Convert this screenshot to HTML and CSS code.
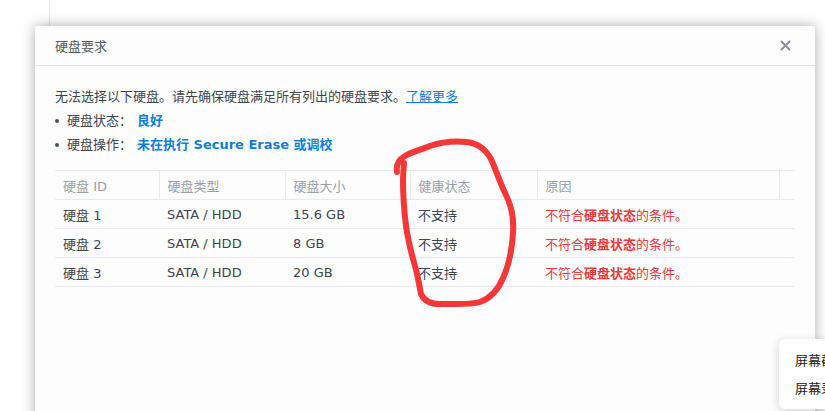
FILE: index.html
```html
<!DOCTYPE html>
<html lang="zh-CN">
<head>
<meta charset="utf-8">
<title>硬盘要求</title>
<link rel="stylesheet" href="styles.css">
</head>
<body>
<div class="backdrop"></div>

<div class="dialog">
  <div class="dlg-header">
    <span class="dlg-title">硬盘要求</span>
    <svg class="close" width="11" height="11" viewBox="0 0 11 11"><path d="M1 1L10 10M10 1L1 10" stroke="#8b9099" stroke-width="2" fill="none"/></svg>
  </div>
  <div class="dlg-body">
    <p class="intro">无法选择以下硬盘。请先确保硬盘满足所有列出的硬盘要求。<a class="link" href="#">了解更多</a></p>
    <ul class="reqs">
      <li><span class="label">硬盘状态：</span><span class="value">良好</span></li>
      <li><span class="label">硬盘操作：</span><span class="value">未在执行 Secure Erase 或调校</span></li>
    </ul>
    <table class="grid">
      <colgroup>
        <col style="width:104px"><col style="width:126px"><col style="width:125px"><col style="width:127px"><col style="width:242px"><col>
      </colgroup>
      <thead>
        <tr><th>硬盘 ID</th><th>硬盘类型</th><th>硬盘大小</th><th>健康状态</th><th>原因</th><th class="last"></th></tr>
      </thead>
      <tbody>
        <tr><td>硬盘 1</td><td>SATA / HDD</td><td>15.6 GB</td><td>不支持</td><td class="reason">不符合<b>硬盘状态</b>的条件。</td><td></td></tr>
        <tr><td>硬盘 2</td><td>SATA / HDD</td><td>8 GB</td><td>不支持</td><td class="reason">不符合<b>硬盘状态</b>的条件。</td><td></td></tr>
        <tr><td>硬盘 3</td><td>SATA / HDD</td><td>20 GB</td><td>不支持</td><td class="reason">不符合<b>硬盘状态</b>的条件。</td><td></td></tr>
      </tbody>
    </table>
  </div>
</div>

<svg class="scribble" width="825" height="411" viewBox="0 0 825 411">
  <path d="M397 172 C396 166 398 160 405 156 C412 152 420 150 430 146 C442 142 455 141 466 142 C478 143 486 150 491 159 C496 170 500 183 506 195 C512 207 514 220 513 233 C512 250 509 265 503 278 C498 290 491 298 480 302 C470 305 455 304 440 304 C430 304 424 301 421 294 C419 285 418 276 415 266 C411 252 408 240 406 226 C404 210 403 195 403 180 C403 172 404 166 404 163" fill="none" stroke="#f73737" stroke-width="6" stroke-linecap="round" stroke-linejoin="round"/>
</svg>

<div class="ctx-menu">
  <div class="ctx-item">屏幕截图</div>
  <div class="ctx-item">屏幕录制</div>
</div>
</body>
</html>
```

FILE: styles.css
```css
html, body {
  margin: 0;
  padding: 0;
  width: 825px;
  height: 411px;
  overflow: hidden;
  background: #ffffff;
  font-family: "DejaVu Sans", "Noto Sans CJK SC", sans-serif;
  font-size: 13px;
  color: #3c4650;
}

.backdrop {
  margin-left: 49px;
  height: 411px;
  border-left: 1px solid #e4e4e4;
}

.dialog {
  position: absolute;
  left: 35px;
  top: 26px;
  width: 780px;
  height: 420px;
  background: #fdfdfd;
  border-radius: 3px;
  box-shadow: 0 0 14px rgba(0, 0, 0, 0.33);
}

.dlg-header {
  height: 39px;
  padding: 0 24px 0 20px;
  border-bottom: 1px solid #e3e3e3;
  display: flex;
  align-items: center;
  justify-content: space-between;
}

.dlg-title {
  font-family: "Noto Sans CJK SC", sans-serif;
  font-size: 13px;
  color: #525a63;
}

.close {
  display: block;
}

.dlg-body {
  padding: 19px 20px 0 20px;
}

.intro {
  margin: 0;
  line-height: 24px;
  color: #3c4650;
}

.link {
  color: #0a7fe0;
  text-decoration: underline;
}

.reqs {
  list-style: none;
  margin: 0;
  padding: 0;
}

.reqs li {
  display: flex;
  align-items: center;
  line-height: 24px;
}

.reqs li::before {
  content: "";
  width: 4px;
  height: 4px;
  border-radius: 50%;
  background: #4a525c;
  margin: 0 8px 0 0;
}

.label {
  color: #3c4650;
}

.value {
  margin-left: 5px;
  color: #0a7fe0;
  font-weight: bold;
}

.grid {
  margin-top: 13px;
  width: 740px;
  border-collapse: collapse;
  table-layout: fixed;
}

.grid th,
.grid td {
  height: 28px;
  padding: 0 0 0 8px;
  text-align: left;
  white-space: nowrap;
  border-bottom: 1px solid #e6ebf1;
}

.grid th {
  font-weight: normal;
  color: #9aa0a7;
  border-top: 1px solid #e6ebf1;
  border-right: 1px solid #e6ebf1;
}

.grid th.last {
  border-right: none;
}

.grid td {
  color: #3c4650;
}

.grid td.reason {
  color: #f03a3a;
}

.grid td.reason b {
  font-weight: bold;
}

.scribble {
  position: absolute;
  left: 0;
  top: 0;
  pointer-events: none;
}

.ctx-menu {
  position: absolute;
  left: 779px;
  top: 339px;
  width: 130px;
  padding: 7px 0;
  background: #ffffff;
  border-radius: 6px;
  box-shadow: 0 2px 10px rgba(0, 0, 0, 0.18);
}

.ctx-item {
  padding-left: 16px;
  line-height: 28px;
  font-family: "Noto Sans CJK SC", sans-serif;
  font-size: 13px;
  color: #222222;
}
```
